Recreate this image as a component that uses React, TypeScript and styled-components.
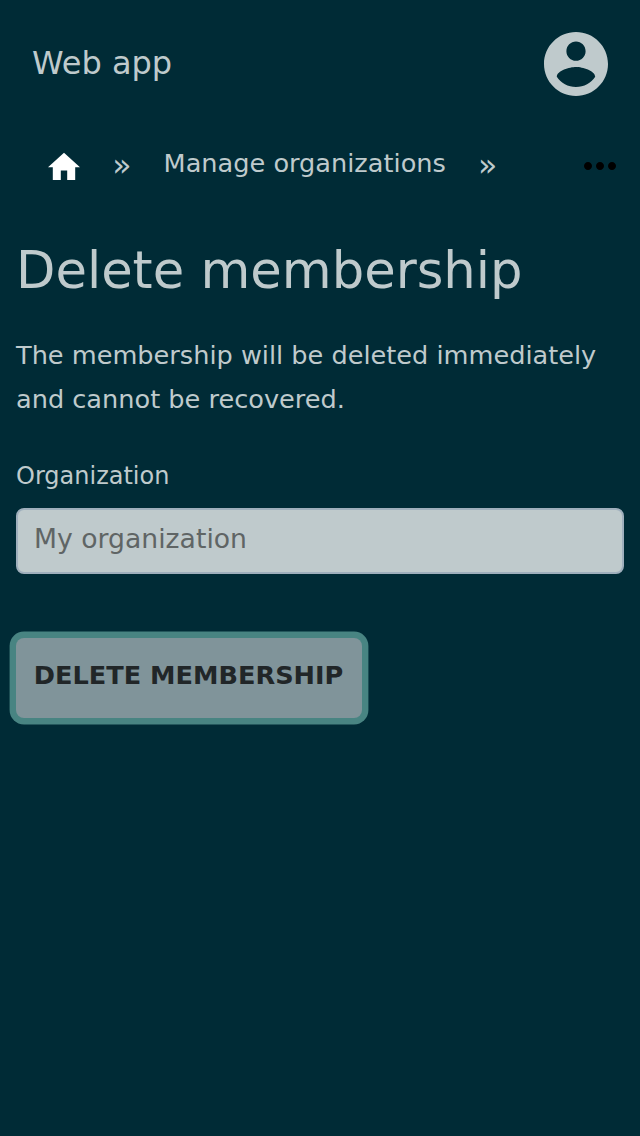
import React from "react";
import styled, { createGlobalStyle } from "styled-components";
import { MdHome, MdMoreHoriz } from "react-icons/md";

const GlobalStyle = createGlobalStyle`
  * { box-sizing: border-box; }
  html, body { margin: 0; background: #002b36; }
  body { font-family: "DejaVu Sans", sans-serif; color: #bfcacc; }
`;

const Page = styled.div`
  min-height: 1136px;
  background: #002b36;
`;

const Header = styled.header`
  display: flex;
  align-items: center;
  justify-content: space-between;
  height: 128px;
  padding: 0 32px;
`;

const Brand = styled.a`
  padding-bottom: 2px;
  font-size: 32px;
  line-height: 48px;
`;

const AccountIcon = styled.svg`
  display: block;
  width: 64px;
  height: 64px;
  fill: currentColor;
`;

const Breadcrumb = styled.nav`
  display: flex;
  align-items: center;
  height: 76px;
  padding: 0 16px 0 44px;
`;

const HomeIcon = styled(MdHome)`
  width: 40px;
  height: 38.4px;
  margin-top: 2px;
  color: #fff;
`;

const Separator = styled.span`
  width: 20px;
  margin-left: 28.2px;
  padding-bottom: 2px;
  font-size: 31.5px;
  line-height: 44px;
`;

const Crumb = styled.a`
  margin: 0 4px 0 31.4px;
  padding-bottom: 6px;
  font-size: 25.6px;
  line-height: 44px;
`;

const MoreIcon = styled(MdMoreHoriz)`
  width: 48px;
  height: 48px;
  margin-left: auto;
  color: #000;
`;

const Main = styled.main`
  padding: 30px 16px 0;
`;

const Title = styled.h1`
  margin: 0;
  font-size: 51.2px;
  font-weight: 400;
  line-height: 72px;
`;

const Description = styled.p`
  margin: 27px 0 0;
  font-size: 25.6px;
  line-height: 44px;
`;

const Label = styled.label`
  display: block;
  margin-top: 37px;
  font-size: 24px;
  line-height: 36px;
`;

const Field = styled.input`
  display: block;
  width: 100%;
  height: 66px;
  margin-top: 14px;
  padding: 0 16px 6px;
  border: 2px solid #9fafbc;
  border-radius: 8px;
  background: #bfcacc;
  color: #5f6565;
  font: 26.67px "DejaVu Sans", sans-serif;
`;

const SubmitButton = styled.button`
  display: block;
  width: 346px;
  height: 80px;
  margin: 64px 0 0;
  padding: 0 1px 6px 0;
  border: 0;
  border-radius: 8px;
  background: #80949a;
  box-shadow: 0 0 0 6.4px #488482;
  color: #212628;
  font: bold 25.6px "DejaVu Sans", sans-serif;
`;

export default function App() {
  return (
    <Page>
      <GlobalStyle />
      <Header>
        <Brand>Web app</Brand>
        <AccountIcon viewBox="2 2 20 20" aria-label="Account">
          <path d="M12 2C6.48 2 2 6.48 2 12s4.48 10 10 10 10-4.48 10-10S17.52 2 12 2zm0 3c1.66 0 3 1.34 3 3s-1.34 3-3 3-3-1.34-3-3 1.34-3 3-3zm0 14.2c-2.5 0-4.71-1.28-6-3.22.03-1.99 4-3.08 6-3.08 1.99 0 5.97 1.09 6 3.08-1.29 1.94-3.5 3.22-6 3.22z" />
        </AccountIcon>
      </Header>
      <Breadcrumb>
        <HomeIcon />
        <Separator>»</Separator>
        <Crumb>Manage organizations</Crumb>
        <Separator>»</Separator>
        <MoreIcon />
      </Breadcrumb>
      <Main>
        <Title>Delete membership</Title>
        <Description>
          The membership will be deleted immediately and cannot be recovered.
        </Description>
        <Label htmlFor="organization">Organization</Label>
        <Field id="organization" value="My organization" readOnly />
        <SubmitButton>DELETE MEMBERSHIP</SubmitButton>
      </Main>
    </Page>
  );
}
